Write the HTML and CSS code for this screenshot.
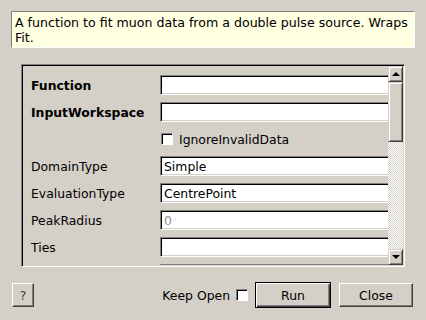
FILE: index.html
```html
<!DOCTYPE html>
<html lang="en">
<head>
    <meta charset="UTF-8">
    <meta name="viewport" content="width=device-width, initial-scale=1.0">
    <title>Fit Muon Data</title>
    <link rel="stylesheet" href="styles.css">
</head>
<body>

<div class="dialog">
    <div class="description">A function to fit muon data from a double pulse source. Wraps<br>Fit.</div>

    <div class="frame">
        <div class="props">
            <div class="row">
                <div class="label bold">Function</div>
                <div class="field"></div>
            </div>
            <div class="row">
                <div class="label bold">InputWorkspace</div>
                <div class="field"></div>
            </div>
            <div class="row">
                <div class="label"></div>
                <div class="check-wrap"><span class="check"></span>IgnoreInvalidData</div>
            </div>
            <div class="row">
                <div class="label">DomainType</div>
                <div class="field">Simple</div>
            </div>
            <div class="row">
                <div class="label">EvaluationType</div>
                <div class="field">CentrePoint</div>
            </div>
            <div class="row">
                <div class="label">PeakRadius</div>
                <div class="field disabled">0</div>
            </div>
            <div class="row">
                <div class="label">Ties</div>
                <div class="field"></div>
            </div>
            <div class="row">
                <div class="label"></div>
                <div class="field"></div>
            </div>
        </div>
        <div class="scrollbar">
            <div class="sb-btn"><span class="arrow-up"></span></div>
            <div class="sb-thumb"></div>
            <div class="sb-trough"></div>
            <div class="sb-btn"><span class="arrow-down"></span></div>
        </div>
    </div>

    <div class="footer">
        <button class="btn help">?</button>
        <div class="spacer"></div>
        <span class="keep-open">Keep Open</span>
        <span class="check"></span>
        <button class="btn run">Run</button>
        <button class="btn close">Close</button>
    </div>
</div>

</body>
</html>
```

FILE: styles.css
```css
body {
    margin: 0;
    padding: 0;
    background-color: #d4d0c8;
    font-family: "DejaVu Sans", Verdana, sans-serif;
    font-size: 12.4px;
    color: #000;
}

.dialog {
    width: 426px;
    height: 320px;
    padding-top: 11px;
    box-sizing: border-box;
    display: flex;
    flex-direction: column;
}

.description {
    margin: 0 11px;
    height: 37px;
    box-sizing: border-box;
    padding: 3px 0 0 3px;
    font-size: 12.6px;
    line-height: 15px;
    white-space: nowrap;
    overflow: hidden;
    background-color: #ffffe1;
    border-top: 1px solid #808080;
    border-left: 1px solid #808080;
    border-bottom: 1px solid #fff;
    border-right: 1px solid #fff;
}

.frame {
    margin: 16px 0 0 21px;
    width: 384px;
    height: 203px;
    box-sizing: border-box;
    border-top: 1px solid #808080;
    border-left: 1px solid #808080;
    border-bottom: 1px solid #fff;
    border-right: 1px solid #fff;
    box-shadow: inset 1px 1px #000, inset -1px -1px #d4d0c8;
    padding: 1px;
    display: flex;
}

.props {
    flex: 1;
    overflow: hidden;
    padding: 9px 0 0 8px;
    display: flex;
    flex-direction: column;
    gap: 7px;
}

.row {
    display: flex;
    align-items: center;
    height: 20px;
    flex-shrink: 0;
}

.label {
    width: 129px;
    flex-shrink: 0;
}

.bold {
    font-weight: bold;
}

.field {
    flex: 1;
    height: 20px;
    margin-right: -4px;
    box-sizing: border-box;
    background-color: #fff;
    border-top: 1px solid #808080;
    border-left: 1px solid #808080;
    border-bottom: 1px solid #fff;
    border-right: 1px solid #fff;
    box-shadow: inset 1px 1px #000, inset -1px -1px #d4d0c8;
    padding: 2px 0 0 3px;
    line-height: 15px;
}

.disabled {
    color: #909090;
}

.check-wrap {
    display: flex;
    align-items: center;
    gap: 6px;
    padding-left: 1px;
}

.check {
    display: inline-block;
    width: 12px;
    height: 12px;
    box-sizing: border-box;
    background-color: #fff;
    border-top: 1px solid #808080;
    border-left: 1px solid #808080;
    border-bottom: 1px solid #fff;
    border-right: 1px solid #fff;
    box-shadow: inset 1px 1px #000;
}

.scrollbar {
    width: 15px;
    display: flex;
    flex-direction: column;
}

.sb-btn, .sb-thumb {
    box-sizing: border-box;
    background-color: #d4d0c8;
    border-top: 1px solid #d4d0c8;
    border-left: 1px solid #d4d0c8;
    border-bottom: 1px solid #404040;
    border-right: 1px solid #404040;
    box-shadow: inset 1px 1px #fff, inset -1px -1px #808080;
}

.sb-btn {
    height: 16px;
    display: flex;
    align-items: center;
    justify-content: center;
}

.sb-thumb {
    height: 60px;
}

.sb-trough {
    flex: 1;
    background-color: #d4d0c8;
    background-image: conic-gradient(#fff 25%, #d4d0c8 0 50%, #fff 0 75%, #d4d0c8 0);
    background-size: 2px 2px;
}

.arrow-up {
    width: 0;
    height: 0;
    border-left: 4px solid transparent;
    border-right: 4px solid transparent;
    border-bottom: 4px solid #000;
}

.arrow-down {
    width: 0;
    height: 0;
    border-left: 4px solid transparent;
    border-right: 4px solid transparent;
    border-top: 4px solid #000;
}

.footer {
    display: flex;
    align-items: center;
    margin-top: 15px;
    padding: 0 13px 0 12px;
    height: 26px;
}

.spacer {
    flex: 1;
}

.keep-open {
    margin-right: 6px;
}

.btn {
    font-family: "DejaVu Sans", Verdana, sans-serif;
    font-size: 12.4px;
    color: #000;
    background-color: #d4d0c8;
    box-sizing: border-box;
    height: 24px;
    padding: 0;
    border-top: 1px solid #fff;
    border-left: 1px solid #fff;
    border-bottom: 1px solid #404040;
    border-right: 1px solid #404040;
    box-shadow: inset -1px -1px #808080;
}

.help {
    width: 22px;
    color: #404040;
}

.run {
    width: 76px;
    height: 26px;
    margin-left: 7px;
    border: 1px solid #000;
    box-shadow: inset 1px 1px #fff, inset -1px -1px #404040, inset -2px -2px #808080;
}

.close {
    width: 74px;
    margin-left: 8px;
}
```
